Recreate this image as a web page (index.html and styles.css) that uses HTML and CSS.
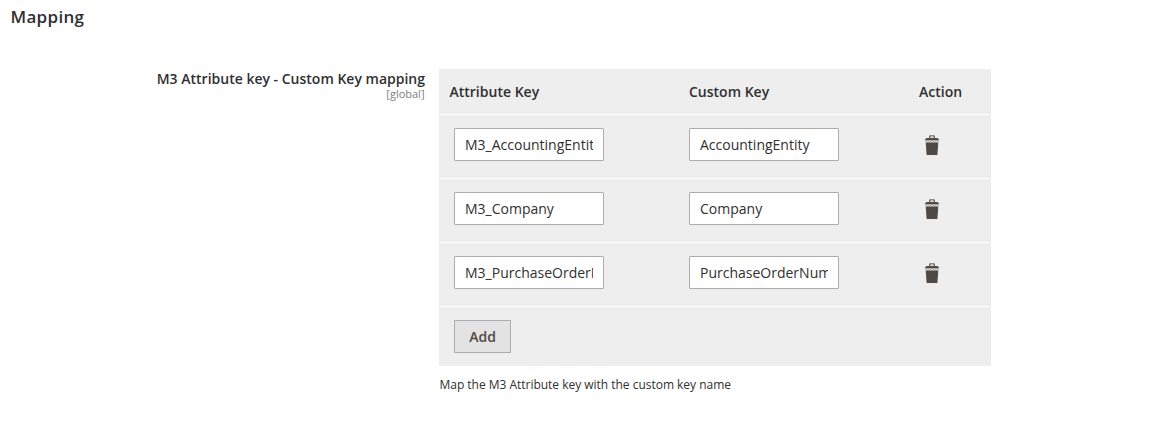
FILE: index.html
```html
<!DOCTYPE html>
<html lang="en">
<head>
<meta charset="utf-8">
<title>Mapping</title>
<link rel="stylesheet" href="styles.css">
</head>
<body>
<svg width="0" height="0" class="sprite" aria-hidden="true">
  <symbol id="trash" viewBox="0 0 16 21">
    <path d="M5 3V1.4Q5 .2 6 .2h4Q11 .2 11 1.4V3H9.6V1.6H6.4V3z" opacity=".8"/>
    <path d="M3 3h10Q15 3.3 15.2 5.2H.8Q1 3.3 3 3zM1.7 7.6h12.6L13.4 20H2.6z"/>
    <path d="M1.5 5.2h13v2.4h-13z" opacity=".25"/>
  </symbol>
</svg>
<h1 class="title">Mapping</h1>
<section class="field">
  <div class="label">
    <span class="label-text">M3 Attribute key - Custom Key mapping</span>
    <span class="scope">[global]</span>
  </div>
  <div class="value">
    <div class="table">
      <div class="row head"><span class="first">Attribute Key</span><span>Custom Key</span><span>Action</span></div>
      <div class="row"><input class="text" value="M3_AccountingEntity"><input class="text" value="AccountingEntity"><button class="delete" aria-label="Delete"><svg class="icon"><use href="#trash"/></svg></button></div>
      <div class="row"><input class="text" value="M3_Company"><input class="text" value="Company"><button class="delete" aria-label="Delete"><svg class="icon"><use href="#trash"/></svg></button></div>
      <div class="row"><input class="text" value="M3_PurchaseOrderNumber"><input class="text" value="PurchaseOrderNumber"><button class="delete" aria-label="Delete"><svg class="icon"><use href="#trash"/></svg></button></div>
      <div class="foot"><button class="add">Add</button></div>
    </div>
    <p class="note">Map the M3 Attribute key with the custom key name</p>
  </div>
</section>
</body>
</html>
```
FILE: styles.css
```css
* { box-sizing: border-box; }
body {
  margin: 0;
  background: #fff;
  color: #303030;
  font: 400 14px/19px "Open Sans", sans-serif;
}
.sprite { display: block; }
.title {
  margin: 0;
  padding: 6px 0 0 10.5px;
  height: 69px;
  font-size: 17px;
  font-weight: 600;
  line-height: 22px;
  letter-spacing: .3px;
}
.field { display: grid; grid-template-columns: 425px 552px; column-gap: 14px; }
.label { display: flex; flex-direction: column; align-items: flex-end; }
.label-text { font-weight: 600; white-space: nowrap; }
.scope { margin-top: -1px; padding-right: .5px; color: #808080; font-size: 11px; line-height: 14px; }
.table { background: #eee; }
.row {
  display: grid;
  grid-template-columns: 235px 230px 1fr;
  height: 64px;
  padding: 13px 0 0 15px;
  border-bottom: 1px solid #fff;
}
.head { height: 46px; font-weight: 600; }
.first { margin-left: -4.5px; }
.text {
  width: 150px;
  height: 33px;
  padding: 0 10px;
  border: 1px solid #adadad;
  border-radius: 1px;
  background: #fff;
  color: #303030;
  font: 400 14px "Open Sans", sans-serif;
}
.delete {
  width: 26px;
  height: 33px;
  padding: 2px 0 0;
  border: 0;
  background: none;
  color: #514943;
}
.icon { display: block; width: 16px; height: 21px; margin: 0 auto; fill: currentColor; }
.foot { height: 59px; padding: 13px 15px; }
.add {
  width: 57px;
  height: 33px;
  padding: 0;
  border: 1px solid #adadad;
  background: #e3e3e3;
  color: #514943;
  font: 600 14px "Open Sans", sans-serif;
}
.note { margin: 10px 0 0; padding-left: .5px; font-size: 12px; line-height: 17px; letter-spacing: -.02px; }
```
